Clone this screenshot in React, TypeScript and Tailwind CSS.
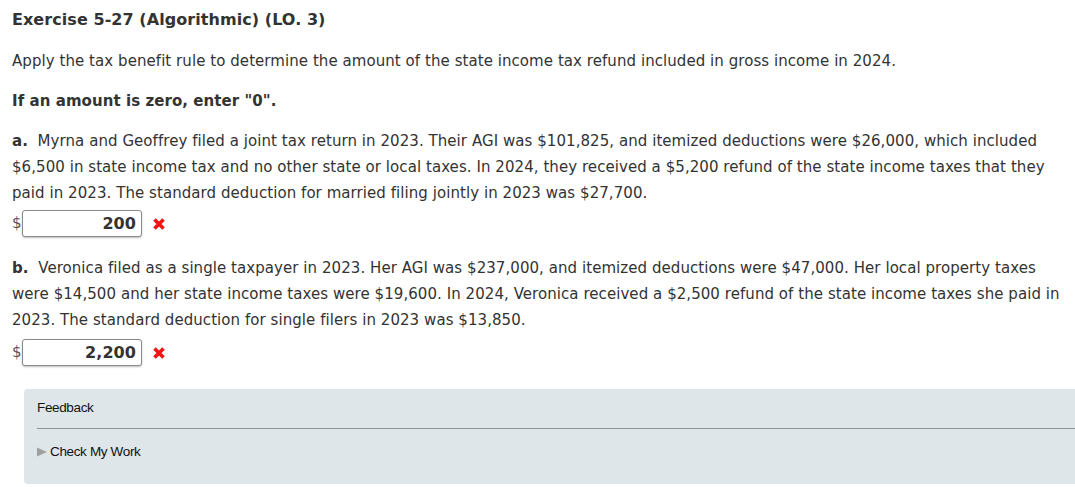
import React from 'react'

const font = { fontFamily: 'Verdana, "DejaVu Sans", sans-serif' }

function Wrong() {
  return (
    <svg width="14" height="14" viewBox="0 0 14 14" className="ml-[10px]">
      <path d="M2.5 2.5 L11.5 11.5 M11.5 2.5 L2.5 11.5" stroke="#f01414" strokeWidth="3.6" strokeLinecap="butt" />
    </svg>
  )
}

function Answer({ value }: { value: string }) {
  return (
    <div className="flex items-center h-[27px]">
      <span className="w-[10px] text-[#555]">$</span>
      <input
        readOnly
        value={value}
        style={font}
        className="w-[120px] h-[27px] border border-[#8a8a8a] rounded-[3px] shadow-[0_1px_2px_rgba(0,0,0,0.25)] text-right pr-[5px] font-bold text-[16px] text-[#333] bg-white outline-none"
      />
      <Wrong />
    </div>
  )
}

export default function App() {
  return (
    <div style={font} className="bg-white text-[#333] text-[15px] tracking-[0.06px] px-3 pt-2 w-[1075px] h-[487px] overflow-hidden">
      <h1 className="font-bold text-[16px] leading-6">Exercise 5-27 (Algorithmic) (LO. 3)</h1>
      <p className="mt-4 leading-[26px] whitespace-nowrap">
        Apply the tax benefit rule to determine the amount of the state income tax refund included in gross income in 2024.
      </p>
      <p className="mt-[14px] leading-[26px] font-bold">If an amount is zero, enter "0".</p>
      <p className="mt-[14px] leading-[26px] whitespace-nowrap">
        <b>a.</b>&nbsp; Myrna and Geoffrey filed a joint tax return in 2023. Their AGI was $101,825, and itemized deductions were $26,000, which included
        <br />
        $6,500 in state income tax and no other state or local taxes. In 2024, they received a $5,200 refund of the state income taxes that they
        <br />
        paid in 2023. The standard deduction for married filing jointly in 2023 was $27,700.
      </p>
      <div className="mt-[4px]">
        <Answer value="200" />
      </div>
      <p className="mt-[18px] leading-[26px] whitespace-nowrap">
        <b>b.</b>&nbsp; Veronica filed as a single taxpayer in 2023. Her AGI was $237,000, and itemized deductions were $47,000. Her local property taxes
        <br />
        were $14,500 and her state income taxes were $19,600. In 2024, Veronica received a $2,500 refund of the state income taxes she paid in
        <br />
        2023. The standard deduction for single filers in 2023 was $13,850.
      </p>
      <div className="mt-[6px]">
        <Answer value="2,200" />
      </div>
      <div
        className="mt-[23px] ml-3 w-[1060px] h-[95px] bg-[#dfe6e9] rounded-[4px] pl-[13px] text-[13.5px] tracking-[-0.35px] text-[#111]"
        style={{ fontFamily: 'Arial, "Liberation Sans", sans-serif' }}
      >
        <div className="pt-[10px] leading-[18px]">Feedback</div>
        <div className="mt-[11px] border-t border-[#8f979b]" />
        <div className="mt-[14px] flex items-center leading-[18px]">
          <svg width="10" height="10" viewBox="0 0 10 10" className="mr-[3px]">
            <path d="M0 0.5 L10 5 L0 9.5 Z" fill="#a0a0a0" />
          </svg>
          Check My Work
        </div>
      </div>
    </div>
  )
}
